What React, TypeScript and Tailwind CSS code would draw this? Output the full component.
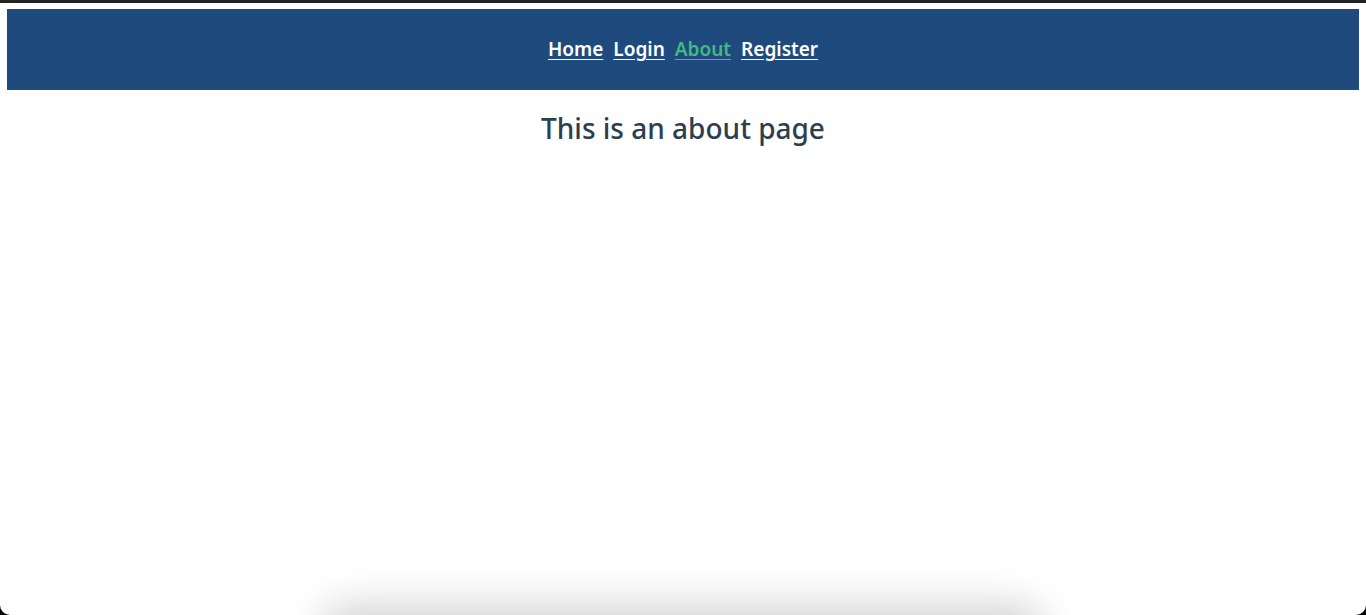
const links = [
  { label: "Home", active: false },
  { label: "Login", active: false },
  { label: "About", active: true },
  { label: "Register", active: false },
];

export default function App() {
  return (
    <div className="relative h-[615px] overflow-hidden bg-black font-['Noto_Sans','Lato',sans-serif]">
      <div className="h-[3px] bg-[#232323]" />
      <div className="flex h-[612px] flex-col rounded-b-[10px] bg-white px-[7px] pt-[6px]">
        <nav className="flex h-[81px] items-center justify-center gap-[10px] bg-[#1f4a7e]">
          {links.map((link) => (
            <a
              key={link.label}
              href="#"
              className={
                link.active
                  ? "text-[19px] font-semibold text-[#42b983] underline underline-offset-[3px]"
                  : "text-[19px] font-semibold text-white underline underline-offset-[3px]"
              }
            >
              {link.label}
            </a>
          ))}
        </nav>
        <h1 className="mt-[17px] text-center text-[28px] font-medium text-[#2c3e50]">
          This is an about page
        </h1>
      </div>
      <div className="absolute left-[330px] top-[615px] h-[40px] w-[705px] rounded-full bg-white shadow-[0_0_40px_10px_rgba(0,0,0,0.18)]" />
    </div>
  );
}
